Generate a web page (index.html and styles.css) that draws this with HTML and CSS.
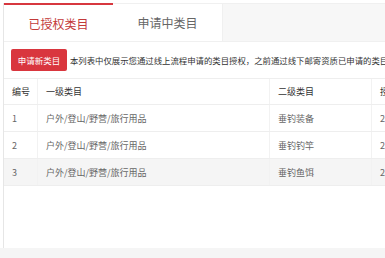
FILE: index.html
```html
<!DOCTYPE html>
<html lang="zh-CN">

<head>
  <meta charset="UTF-8" />
  <meta name="viewport" content="width=device-width, initial-scale=1.0" />
  <title>类目管理</title>
  <link rel="stylesheet" href="styles.css">
</head>

<body>
  <div class="panel">
    <div class="tabs">
      <a href="#" class="tab active">已授权类目</a>
      <a href="#" class="tab">申请中类目</a>
    </div>

    <div class="toolbar">
      <button class="apply-btn">申请新类目</button>
      <span class="notice">本列表中仅展示您通过线上流程申请的类目授权，之前通过线下邮寄资质已申请的类目暂不展示</span>
    </div>

    <table class="cat-table">
      <thead>
        <tr>
          <th class="col-no">编号</th>
          <th class="col-first">一级类目</th>
          <th class="col-second">二级类目</th>
          <th class="col-date">授权时间</th>
        </tr>
      </thead>
      <tbody>
        <tr>
          <td>1</td>
          <td>户外/登山/野营/旅行用品</td>
          <td>垂钓装备</td>
          <td>2016-03-12</td>
        </tr>
        <tr>
          <td>2</td>
          <td>户外/登山/野营/旅行用品</td>
          <td>垂钓钓竿</td>
          <td>2016-03-12</td>
        </tr>
        <tr class="hover">
          <td>3</td>
          <td>户外/登山/野营/旅行用品</td>
          <td>垂钓鱼饵</td>
          <td>2016-03-12</td>
        </tr>
      </tbody>
    </table>
  </div>
  <div class="page-foot"></div>
</body>

</html>
```

FILE: styles.css
```css
body {
  margin: 0;
  font-family: "Noto Sans CJK SC", "Noto Sans", sans-serif;
  background-color: #fff;
  color: #333;
  width: 385px;
  overflow: hidden;
}

.panel {
  margin: 3px 0 0 3px;
  width: 520px;
  height: 245px;
  border-left: 1px solid #e6e6e6;
  background-color: #fff;
}

.tabs {
  display: flex;
  height: 37px;
  background-color: #f7f7f7;
  border-top: 1px solid #f0f0f0;
  border-bottom: 1px solid #f0f0f0;
}

.tab {
  width: 109px;
  margin-top: -1px;
  display: flex;
  align-items: center;
  justify-content: center;
  font-size: 12px;
  color: #666;
  text-decoration: none;
  background-color: #fff;
  border-top: 1px solid #f0f0f0;
  border-right: 1px solid #f0f0f0;
}

.tab.active {
  color: #c33a3a;
  border-top: 2px solid #d7373f;
  border-right: none;
}

.toolbar {
  display: flex;
  align-items: center;
  gap: 3px;
  padding: 7px 0 0 7px;
}

.apply-btn {
  background-color: #d9363e;
  color: #fff;
  border: none;
  border-radius: 2px;
  height: 22px;
  width: 56px;
  padding: 0;
  font-family: inherit;
  font-size: 8.5px;
  cursor: pointer;
}

.notice {
  font-size: 8.4px;
  white-space: nowrap;
  color: #333;
}

.cat-table {
  margin-top: 7px;
  width: 100%;
  border-collapse: collapse;
  font-size: 9px;
  table-layout: fixed;
}

.cat-table th,
.cat-table td {
  text-align: left;
  padding: 0 8px;
  border-top: 1px solid #eee;
  border-bottom: 1px solid #eee;
  border-left: 1px solid #f2f2f2;
  white-space: nowrap;
  overflow: hidden;
}

.cat-table th:first-child,
.cat-table td:first-child {
  border-left: none;
}

.cat-table th {
  height: 25px;
  font-weight: normal;
  color: #333;
}

.cat-table td {
  height: 26px;
  color: #666;
}

.col-no {
  width: 17px;
}

.col-first {
  width: 215px;
}

.col-second {
  width: 85px;
}

.cat-table tr.hover td {
  background-color: #f5f5f5;
}

.page-foot {
  height: 20px;
  background-color: #f5f5f5;
}
```
